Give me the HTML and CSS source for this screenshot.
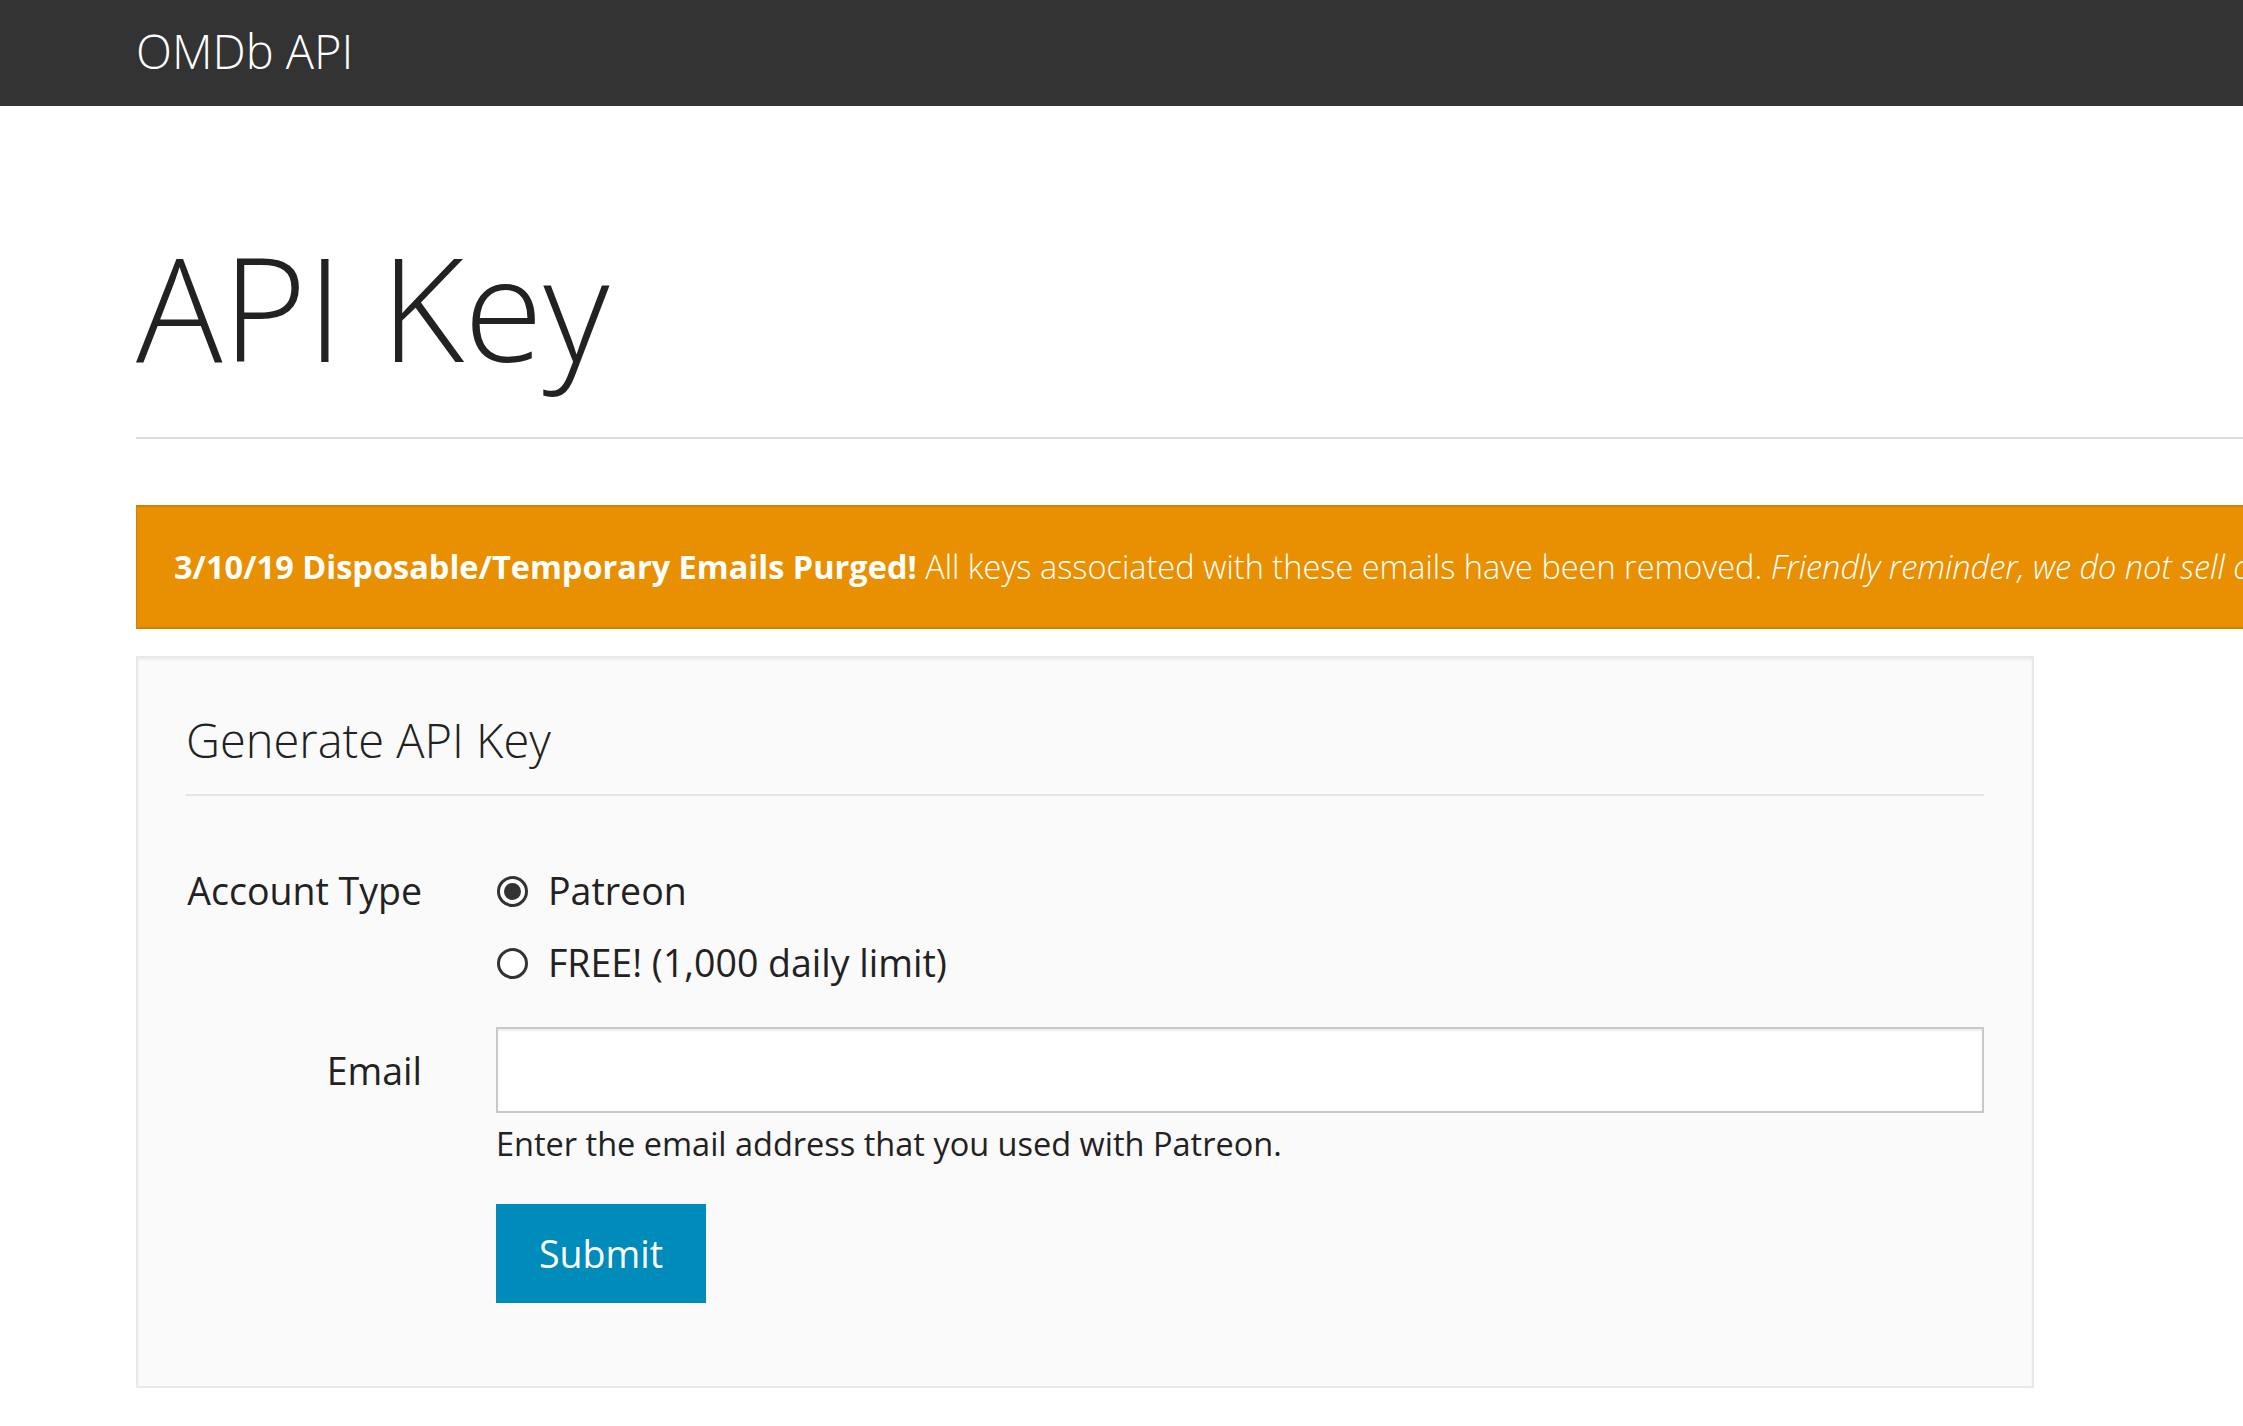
FILE: index.html
```html
<!DOCTYPE html>
<html>
<head>
<meta charset="utf-8">
<title>OMDb API - API Key</title>
<link rel="stylesheet" href="styles.css">
</head>
<body>
<nav class="navbar">
  <div class="navbar-inner">
    <a class="brand" href="#">OMDb API</a>
  </div>
</nav>
<main class="container">
  <div class="page-header">
    <h1>API Key</h1>
  </div>
  <div class="alert"><strong>3/10/19 Disposable/Temporary Emails Purged!</strong> All keys associated with these emails have been removed. <em>Friendly reminder, we do not sell or share your email address with anyone.</em></div>
  <div class="well">
    <form class="form">
      <div class="legend">Generate API Key</div>
      <div class="form-row">
        <div class="control-label">Account Type</div>
        <div class="controls radios">
          <label class="radio"><span class="circle checked"></span><span>Patreon</span></label>
          <label class="radio"><span class="circle"></span><span>FREE! (1,000 daily limit)</span></label>
        </div>
      </div>
      <div class="form-row email-row">
        <div class="control-label email-label">Email</div>
        <div class="controls">
          <div class="input"></div>
          <div class="help">Enter the email address that you used with Patreon.</div>
          <div class="btn">Submit</div>
        </div>
      </div>
    </form>
  </div>
</main>
</body>
</html>
```
FILE: styles.css
```css
html, body {
  margin: 0;
  padding: 0;
  overflow: hidden;
  background: #fff;
}
body {
  font-family: "Open Sans", "Liberation Sans", sans-serif;
  color: #222;
  font-size: 37.5px;
  width: 2243px;
}
.navbar {
  height: 106px;
  background: #333;
}
.navbar-inner {
  padding-left: 136px;
}
.brand {
  display: inline-block;
  font-size: 47px;
  font-weight: 300;
  line-height: 102px;
  color: #fff;
  text-decoration: none;
}
.container {
  padding-left: 136px;
  width: 2600px;
}
.page-header {
  margin-top: 118px;
  padding-bottom: 48px;
  border-bottom: 2px solid #ddd;
}
.page-header h1 {
  margin: 0;
  font-size: 144px;
  font-weight: 300;
  line-height: 165px;
  color: #222;
}
.alert {
  margin-top: 66px;
  background: #e99002;
  border-top: 2px solid #d08002;
  border-bottom: 2px solid #d08002;
  border-left: 1px solid #d08002;
  color: #fff;
  font-size: 32.5px;
  font-weight: 300;
  line-height: 44px;
  padding: 38px 37px;
  white-space: nowrap;
}
.alert strong {
  font-weight: 700;
}
.alert em {
  font-style: italic;
}
.well {
  margin-top: 27px;
  width: 1898px;
  box-sizing: border-box;
  background: #fafafa;
  border: 2px solid #e8e8e8;
  box-shadow: inset 0 2px 3px rgba(0,0,0,0.05);
  padding: 49px 48px 47px 48px;
}
.legend {
  font-size: 47px;
  font-weight: 300;
  line-height: 66px;
  color: #222;
  padding-bottom: 21px;
  border-bottom: 2px solid #e5e5e5;
  margin-bottom: 71px;
}
.form-row {
  display: grid;
  grid-template-columns: 236px 1fr;
  column-gap: 74px;
}
.control-label {
  text-align: right;
  line-height: 48px;
}
.radios {
  display: flex;
  flex-direction: column;
  gap: 24px;
}
.radio {
  display: flex;
  align-items: center;
  gap: 20px;
  line-height: 48px;
}
.circle {
  width: 31px;
  height: 31px;
  box-sizing: border-box;
  border: 3px solid #333;
  border-radius: 50%;
  background: #fff;
  display: flex;
  align-items: center;
  justify-content: center;
  margin-left: 1px;
}
.circle.checked::after {
  content: "";
  width: 17px;
  height: 17px;
  border-radius: 50%;
  background: #333;
}
.email-row {
  margin-top: 40px;
}
.email-label {
  align-self: start;
  padding-top: 20px;
}
.input {
  height: 86px;
  box-sizing: border-box;
  background: #fff;
  border: 2px solid #c8c8c8;
  box-shadow: inset 0 2px 2px rgba(0,0,0,0.075);
}
.help {
  margin-top: 8px;
  font-size: 32.5px;
  line-height: 46px;
  color: #222;
}
.btn {
  display: inline-block;
  margin-top: 37px;
  background: #008cba;
  color: #fff;
  line-height: 47px;
  padding: 26px 43px;
  margin-bottom: 36px;
}
```
